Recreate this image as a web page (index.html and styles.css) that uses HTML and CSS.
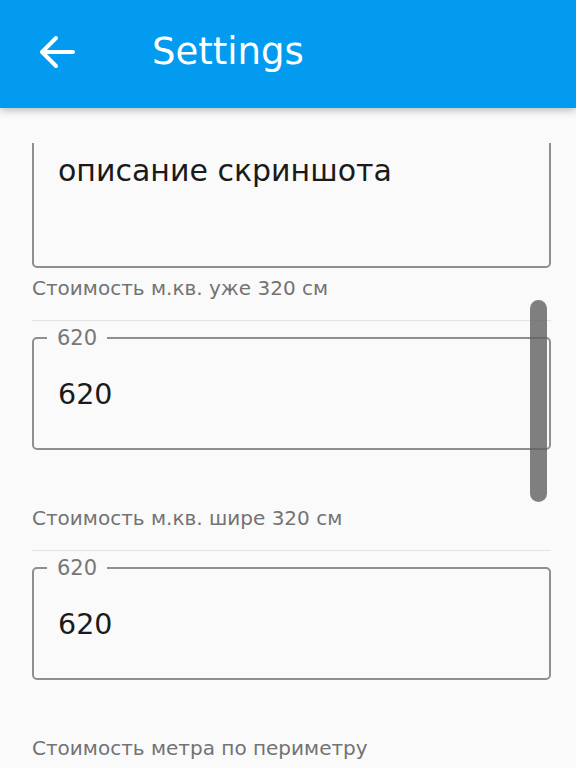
FILE: index.html
```html
<!DOCTYPE html>
<html lang="ru">
<head>
<meta charset="utf-8">
<title>Settings</title>
<link rel="stylesheet" href="styles.css">
</head>
<body>
<header class="appbar">
  <button class="back" aria-label="Back">
    <svg width="36" height="34" viewBox="0 0 36 34"><path d="M34 17H3M17 3L3 17l14 14" fill="none" stroke="#fff" stroke-width="4" stroke-linecap="round" stroke-linejoin="round"/></svg>
  </button>
  <h1 class="title">Settings</h1>
</header>
<main class="viewport">
  <div class="textarea-box">
    <p class="textarea-text">описание скриншота</p>
  </div>
  <p class="label">Стоимость м.кв. уже 320 см</p>
  <hr class="divider">
  <fieldset class="outlined">
    <legend class="legend">620</legend>
    <span class="value">620</span>
  </fieldset>
  <p class="label gap">Стоимость м.кв. шире 320 см</p>
  <hr class="divider">
  <fieldset class="outlined">
    <legend class="legend">620</legend>
    <span class="value">620</span>
  </fieldset>
  <p class="label gap">Стоимость метра по периметру</p>
</main>
<div class="scrollbar"></div>
</body>
</html>
```
FILE: styles.css
```css
html, body {
  margin: 0;
  padding: 0;
  height: 768px;
  overflow: hidden;
  background: #fafafa;
  font-family: "DejaVu Sans", "Noto Sans", sans-serif;
}
.appbar {
  height: 108px;
  background: #039bf0;
  display: flex;
  align-items: center;
  box-shadow: 0 2px 8px rgba(0,0,0,0.28);
  position: relative;
  z-index: 2;
}
.back {
  background: none;
  border: 0;
  padding: 0;
  margin: 0 0 4px 39px;
  width: 36px;
  height: 34px;
  display: flex;
}
.title {
  margin: 0 0 6px 77px;
  color: #fff;
  font-weight: 400;
  font-size: 37px;
}
.viewport {
  margin-top: 35px;
  height: 625px;
  overflow: hidden;
  padding: 0 25px 0 32px;
}
.textarea-box {
  margin-top: -20px;
  height: 145px;
  box-sizing: border-box;
  border: 2px solid #8f8f8f;
  border-radius: 5px;
  padding: 0 24px;
}
.textarea-text {
  margin: 28px 0 0;
  font-size: 30px;
  line-height: 36px;
  color: #1a1a1a;
}
.label {
  margin: 8px 0 0;
  font-size: 20px;
  line-height: 24px;
  color: #737373;
}
.label.gap {
  margin-top: 56px;
}
.divider {
  margin: 20px 0 0;
  border: 0;
  height: 1px;
  background: #e3e3e3;
}
.outlined {
  margin: 6px 0 0;
  min-width: 0;
  height: 123px;
  box-sizing: border-box;
  border: 2px solid #8f8f8f;
  border-radius: 5px;
  padding: 0 24px;
  display: flex;
  align-items: center;
}
.legend {
  margin-left: -11px;
  padding: 0 10px;
  font-size: 21px;
  line-height: 22px;
  color: #777;
}
.value {
  display: block;
  margin-top: -8px;
  font-size: 28.5px;
  color: #1a1a1a;
}
.scrollbar {
  position: absolute;
  left: 530px;
  top: 300px;
  width: 17px;
  height: 202px;
  border-radius: 9px;
  background: rgba(96,96,96,0.8);
  z-index: 3;
}
```
